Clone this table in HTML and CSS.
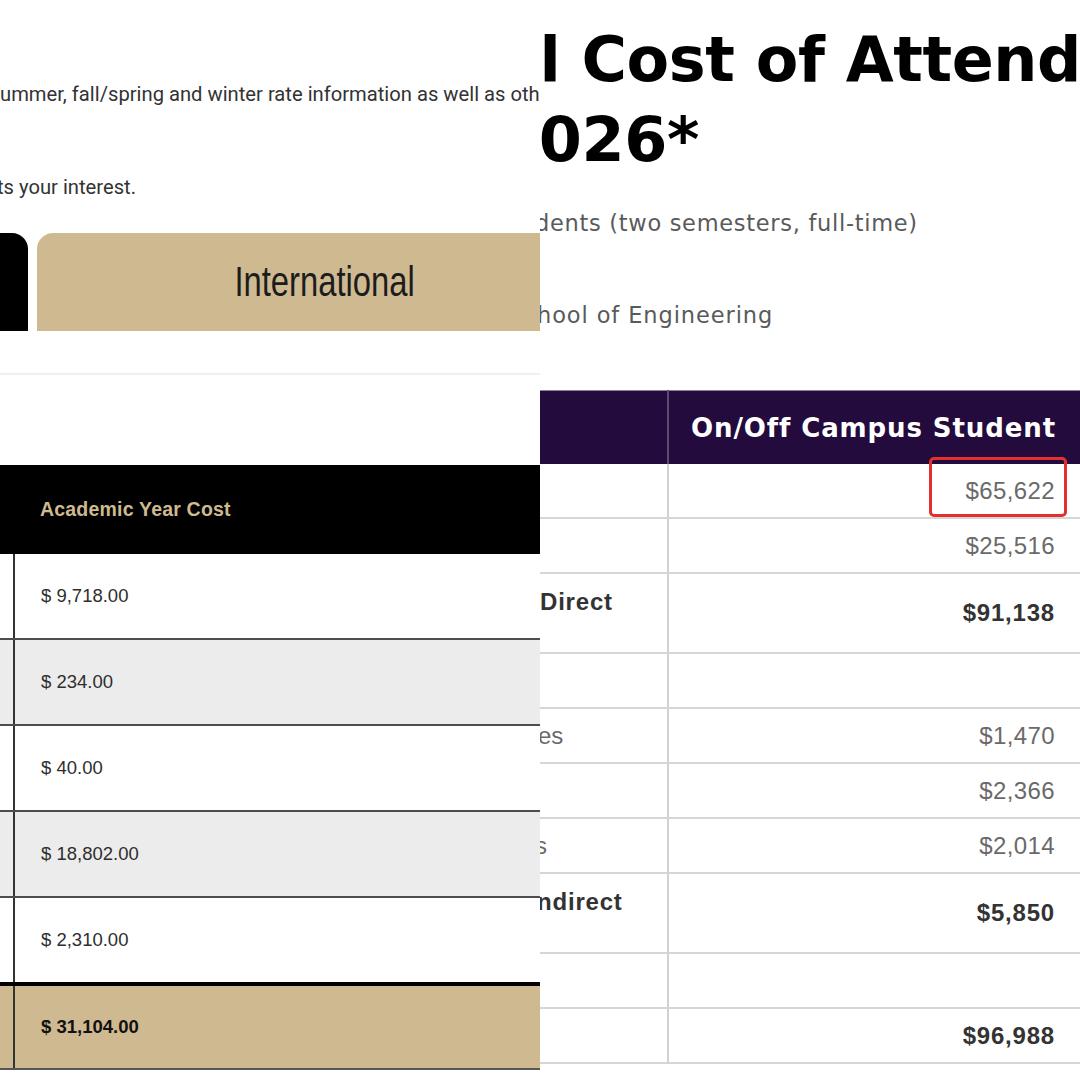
FILE: index.html
```html
<!DOCTYPE html>
<html lang="en">
<head>
<meta charset="utf-8">
<title>Cost of Attendance</title>
<link rel="stylesheet" href="styles.css">
</head>
<body>
<div class="page">
  <section class="panel panel-left">
    <p class="intro intro-first">ummer, fall/spring and winter rate information as well as other</p>
    <p class="intro intro-second">ts your interest.</p>
    <div class="tabs">
      <div class="tab tab-black"></div>
      <div class="tab tab-gold"><span class="tab-label">International</span></div>
    </div>
    <div class="rule"></div>
    <table class="fees">
      <thead>
        <tr><th class="edge"></th><th class="head-cell">Academic Year Cost</th></tr>
      </thead>
      <tbody>
        <tr><td class="edge"></td><td class="amount">$ 9,718.00</td></tr>
        <tr class="shade"><td class="edge"></td><td class="amount">$ 234.00</td></tr>
        <tr><td class="edge"></td><td class="amount">$ 40.00</td></tr>
        <tr class="shade"><td class="edge"></td><td class="amount">$ 18,802.00</td></tr>
        <tr><td class="edge"></td><td class="amount">$ 2,310.00</td></tr>
        <tr class="total"><td class="edge"></td><td class="amount">$ 31,104.00</td></tr>
      </tbody>
    </table>
  </section>

  <section class="panel panel-right">
    <h1 class="title"><span class="line line-one">al Cost of Attendance</span><span class="line line-two">2026*</span></h1>
    <p class="sub sub-first">dents (two semesters, full-time)</p>
    <p class="sub sub-second">hool of Engineering</p>
    <table class="coa">
      <thead>
        <tr><th class="label-col"></th><th class="value-col">On/Off Campus Student</th></tr>
      </thead>
      <tbody>
        <tr><td class="label"></td><td class="value"><span class="marked">$65,622<span class="callout"></span></span></td></tr>
        <tr><td class="label"></td><td class="value">$25,516</td></tr>
        <tr class="tall"><td class="label strong top">Direct</td><td class="value strong">$91,138</td></tr>
        <tr><td class="label"></td><td class="value"></td></tr>
        <tr><td class="label clip-es">es</td><td class="value">$1,470</td></tr>
        <tr><td class="label"></td><td class="value">$2,366</td></tr>
        <tr><td class="label clip-s">s</td><td class="value">$2,014</td></tr>
        <tr class="tall"><td class="label strong top clip-n">ndirect</td><td class="value strong">$5,850</td></tr>
        <tr><td class="label"></td><td class="value"></td></tr>
        <tr><td class="label"></td><td class="value strong">$96,988</td></tr>
      </tbody>
    </table>
  </section>
</div>
</body>
</html>
```

FILE: styles.css
```css
html, body {
  margin: 0;
  padding: 0;
  background: #ffffff;
}

.page {
  display: flex;
  width: 1080px;
  height: 1080px;
  overflow: hidden;
}

.panel {
  width: 540px;
  height: 1080px;
  flex: none;
  overflow: hidden;
  background: #ffffff;
}

/* ---------- Left panel ---------- */
.intro {
  margin: 0;
  font-family: Roboto, "Liberation Sans", sans-serif;
  font-size: 20.2px;
  line-height: 24px;
  color: #333333;
  white-space: nowrap;
}

.intro-first {
  margin-top: 82px;
}

.intro-second {
  margin-top: 69px;
  text-indent: -3px;
}

.tabs {
  display: flex;
  gap: 9px;
  height: 98px;
  margin-top: 34px;
}

.tab {
  flex: none;
}

.tab-black {
  width: 28px;
  background: #000000;
  border-top-right-radius: 16px;
}

.tab-gold {
  width: 576px;
  background: #cfb991;
  border-top-left-radius: 16px;
  display: flex;
  align-items: center;
  justify-content: center;
}

.tab-label {
  display: inline-block;
  font-family: "Liberation Sans", Arial, sans-serif;
  font-size: 42px;
  line-height: 50px;
  color: #1c1c1c;
  transform: scaleX(0.78);
}

.rule {
  margin-top: 42px;
  height: 2px;
  background: #f0f0f0;
}

.fees {
  margin-top: 90px;
  width: 540px;
  border-collapse: collapse;
  font-family: "Liberation Sans", Arial, sans-serif;
}

.fees thead th {
  background: #000000;
  height: 89px;
  padding: 0;
  text-align: left;
}

.fees .head-cell {
  padding-left: 26px;
  color: #cfb991;
  font-size: 19.5px;
  font-weight: 700;
  letter-spacing: 0.2px;
}

.fees th.edge,
.fees td.edge {
  width: 13px;
  padding: 0;
}

.fees tbody td {
  height: 84px;
  padding: 0;
  border-bottom: 2px solid #4d4d4d;
}

.fees tbody td.edge {
  border-right: 2px solid #333333;
}

.fees .amount {
  padding-left: 26px;
  font-size: 18.5px;
  color: #2e2e2e;
}

.fees .shade td {
  background: #ececec;
}

.fees .total td {
  background: #cfb991;
  border-top: 4px solid #000000;
  border-bottom: 2px solid #555555;
  height: 82px;
}

.fees .total .amount {
  font-weight: 700;
  color: #111111;
}

/* ---------- Right panel ---------- */
.title {
  margin: 20px 0 0 0;
  font-family: "DejaVu Sans", "Liberation Sans", sans-serif;
  font-size: 62px;
  line-height: 80px;
  font-weight: 700;
  color: #000000;
  letter-spacing: -0.4px;
  white-space: nowrap;
}

.line {
  display: block;
}

.line-one {
  margin-left: -42px;
}

.line-two {
  margin-left: -44px;
}

.sub {
  margin: 0;
  font-family: "DejaVu Sans", "Liberation Sans", sans-serif;
  font-size: 22.5px;
  line-height: 30px;
  color: #5a5a5a;
  letter-spacing: 0.7px;
  white-space: nowrap;
}

.sub-first {
  margin-top: 28px;
  text-indent: -5px;
}

.sub-second {
  margin-top: 62px;
  text-indent: -3px;
  letter-spacing: 0.9px;
}

.coa {
  margin-top: 60px;
  width: 542px;
  border-collapse: collapse;
  table-layout: fixed;
  font-family: "Liberation Sans", Arial, sans-serif;
}

.coa thead th {
  background: #240b3e;
  height: 73px;
  padding: 0;
  border-top: 1px solid #8c7fa0;
}

.coa .label-col {
  width: 127px;
  border-right: 2px solid #5b4b70;
}

.coa .value-col {
  text-align: right;
  padding-right: 26px;
  color: #ffffff;
  font-family: "DejaVu Sans", "Liberation Sans", sans-serif;
  font-size: 26px;
  font-weight: 700;
  letter-spacing: 0.9px;
  white-space: nowrap;
}

.coa tbody td {
  height: 53px;
  padding: 0;
  border-bottom: 2px solid #d6d6d6;
  font-size: 24px;
  color: #6a6a6a;
  white-space: nowrap;
}

.coa tbody td.label {
  border-right: 2px solid #d2d2d2;
  overflow: visible;
}

.coa .value {
  text-align: right;
  padding-right: 27px;
  letter-spacing: 0.4px;
}

.coa .tall td {
  height: 78px;
}

.coa .strong {
  font-weight: 700;
  color: #333333;
  letter-spacing: 0.8px;
}

.coa tbody td.top {
  vertical-align: top;
  padding-top: 14px;
  height: 64px;
}

.clip-es {
  text-indent: -2px;
}

.clip-s {
  text-indent: -5px;
}

.clip-n {
  text-indent: -3px;
}

.marked {
  position: relative;
  display: inline-block;
}

.callout {
  position: absolute;
  left: -36px;
  right: -12px;
  top: -20px;
  bottom: -12px;
  border: 3px solid #e2302d;
  border-radius: 5px;
}
```
